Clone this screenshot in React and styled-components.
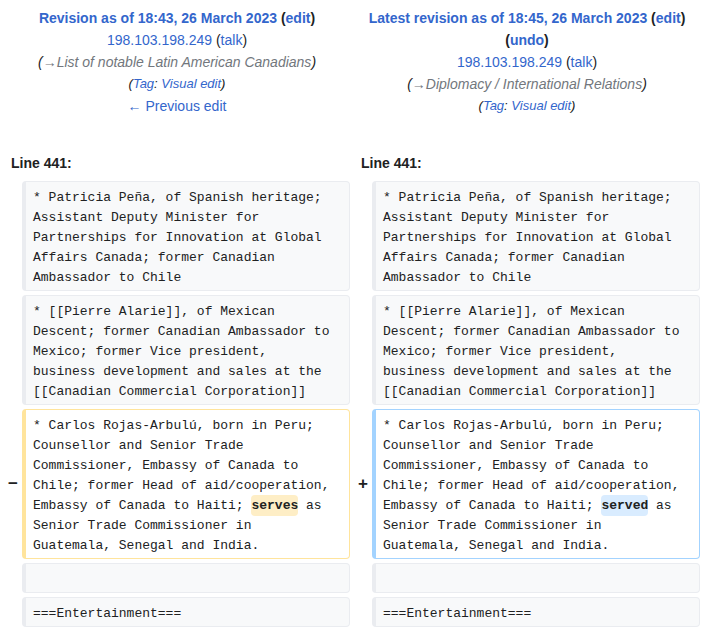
import React from 'react';
import styled, { createGlobalStyle } from 'styled-components';

const Global = createGlobalStyle`
  body {
    margin: 0;
    background: #fff;
    color: #202122;
    font-family: "Liberation Sans", Arial, sans-serif;
  }
`;

const DiffGrid = styled.div`
  width: 704px;
  box-sizing: border-box;
  padding: 7px 4px 0;
  display: grid;
  grid-template-columns: 14px 1fr 14px 1fr;
  column-gap: 4px;
  row-gap: 4px;
`;

const Header = styled.div`
  grid-column: span 2;
  text-align: center;
  font-size: 14px;
  line-height: 22px;
  padding: 0 0 32px;
`;

const HeadLine = styled.div`
  font-weight: ${({ bold }) => (bold ? 'bold' : 'normal')};
  font-style: ${({ italic }) => (italic ? 'italic' : 'normal')};
  font-size: ${({ small }) => (small ? '13px' : '14px')};
  color: ${({ muted }) => (muted ? '#72777d' : '#202122')};
`;

const A = styled.a`
  color: #3366cc;
  text-decoration: none;
`;

const Paren = styled.span`
  color: #202122;
`;

const LineNo = styled.div`
  grid-column: span 2;
  font-weight: bold;
  font-size: 14px;
  line-height: 20px;
  padding: 0 0 4px 7px;
`;

const Marker = styled.div`
  display: flex;
  align-items: center;
  justify-content: flex-end;
  font-weight: bold;
  font-size: 17px;
  color: #202122;
`;

const borders = {
  context: '#eaecf0',
  deleted: '#ffe49c',
  added: '#a3d3ff',
};

const Cell = styled.div`
  box-sizing: border-box;
  font-family: "Liberation Mono", "Courier New", monospace;
  font-size: 13px;
  line-height: 20px;
  white-space: pre-wrap;
  word-wrap: break-word;
  padding: 6px 16px 2px 7px;
  min-height: 30px;
  border-style: solid;
  border-width: 1px 1px 1px 4px;
  border-color: ${({ kind }) => borders[kind]};
  border-radius: 4px;
  background: ${({ kind }) => (kind === 'context' ? '#f8f9fa' : '#fff')};
`;

const Change = styled.span`
  font-weight: bold;
  border-radius: 4px;
  padding: 3px 0;
  background: ${({ kind }) => (kind === 'added' ? '#d9ecff' : '#feeec6')};
`;

const context = [
  '* Patricia Peña, of Spanish heritage; Assistant Deputy Minister for Partnerships for Innovation at Global Affairs Canada; former Canadian Ambassador to Chile',
  '* [[Pierre Alarie]], of Mexican Descent; former Canadian Ambassador to Mexico; former Vice president, business development and sales at the [[Canadian Commercial Corporation]]',
];

const before = '* Carlos Rojas-Arbulú, born in Peru; Counsellor and Senior Trade Commissioner, Embassy of Canada to Chile; former Head of aid/cooperation, Embassy of Canada to Haiti; ';
const after = ' as Senior Trade Commissioner in Guatemala, Senegal and India.';

const ContextRow = ({ text }) => (
  <>
    <Marker />
    <Cell kind="context">{text}</Cell>
    <Marker />
    <Cell kind="context">{text}</Cell>
  </>
);

export default function App() {
  return (
    <>
      <Global />
      <DiffGrid>
        <Header>
          <HeadLine bold>
            <A href="#">Revision as of 18:43, 26 March 2023</A> (<A href="#">edit</A>)
          </HeadLine>
          <HeadLine>
            <A href="#">198.103.198.249</A> (<A href="#">talk</A>)
          </HeadLine>
          <HeadLine italic muted>
            <Paren>(</Paren>→List of notable Latin American Canadians<Paren>)</Paren>
          </HeadLine>
          <HeadLine italic small>
            (<A href="#">Tag</A>: <A href="#">Visual edit</A>)
          </HeadLine>
          <HeadLine>
            <A href="#">← Previous edit</A>
          </HeadLine>
        </Header>
        <Header>
          <HeadLine bold>
            <A href="#">Latest revision as of 18:45, 26 March 2023</A> (<A href="#">edit</A>) (<A href="#">undo</A>)
          </HeadLine>
          <HeadLine>
            <A href="#">198.103.198.249</A> (<A href="#">talk</A>)
          </HeadLine>
          <HeadLine italic muted>
            <Paren>(</Paren>→Diplomacy / International Relations<Paren>)</Paren>
          </HeadLine>
          <HeadLine italic small>
            (<A href="#">Tag</A>: <A href="#">Visual edit</A>)
          </HeadLine>
        </Header>

        <LineNo>Line 441:</LineNo>
        <LineNo>Line 441:</LineNo>

        {context.map((t, i) => (
          <ContextRow key={i} text={t} />
        ))}

        <Marker>−</Marker>
        <Cell kind="deleted">
          {before}
          <Change kind="deleted">serves</Change>
          {after}
        </Cell>
        <Marker>+</Marker>
        <Cell kind="added">
          {before}
          <Change kind="added">served</Change>
          {after}
        </Cell>

        <ContextRow text="" />
        <ContextRow text="===Entertainment===" />
      </DiffGrid>
    </>
  );
}
